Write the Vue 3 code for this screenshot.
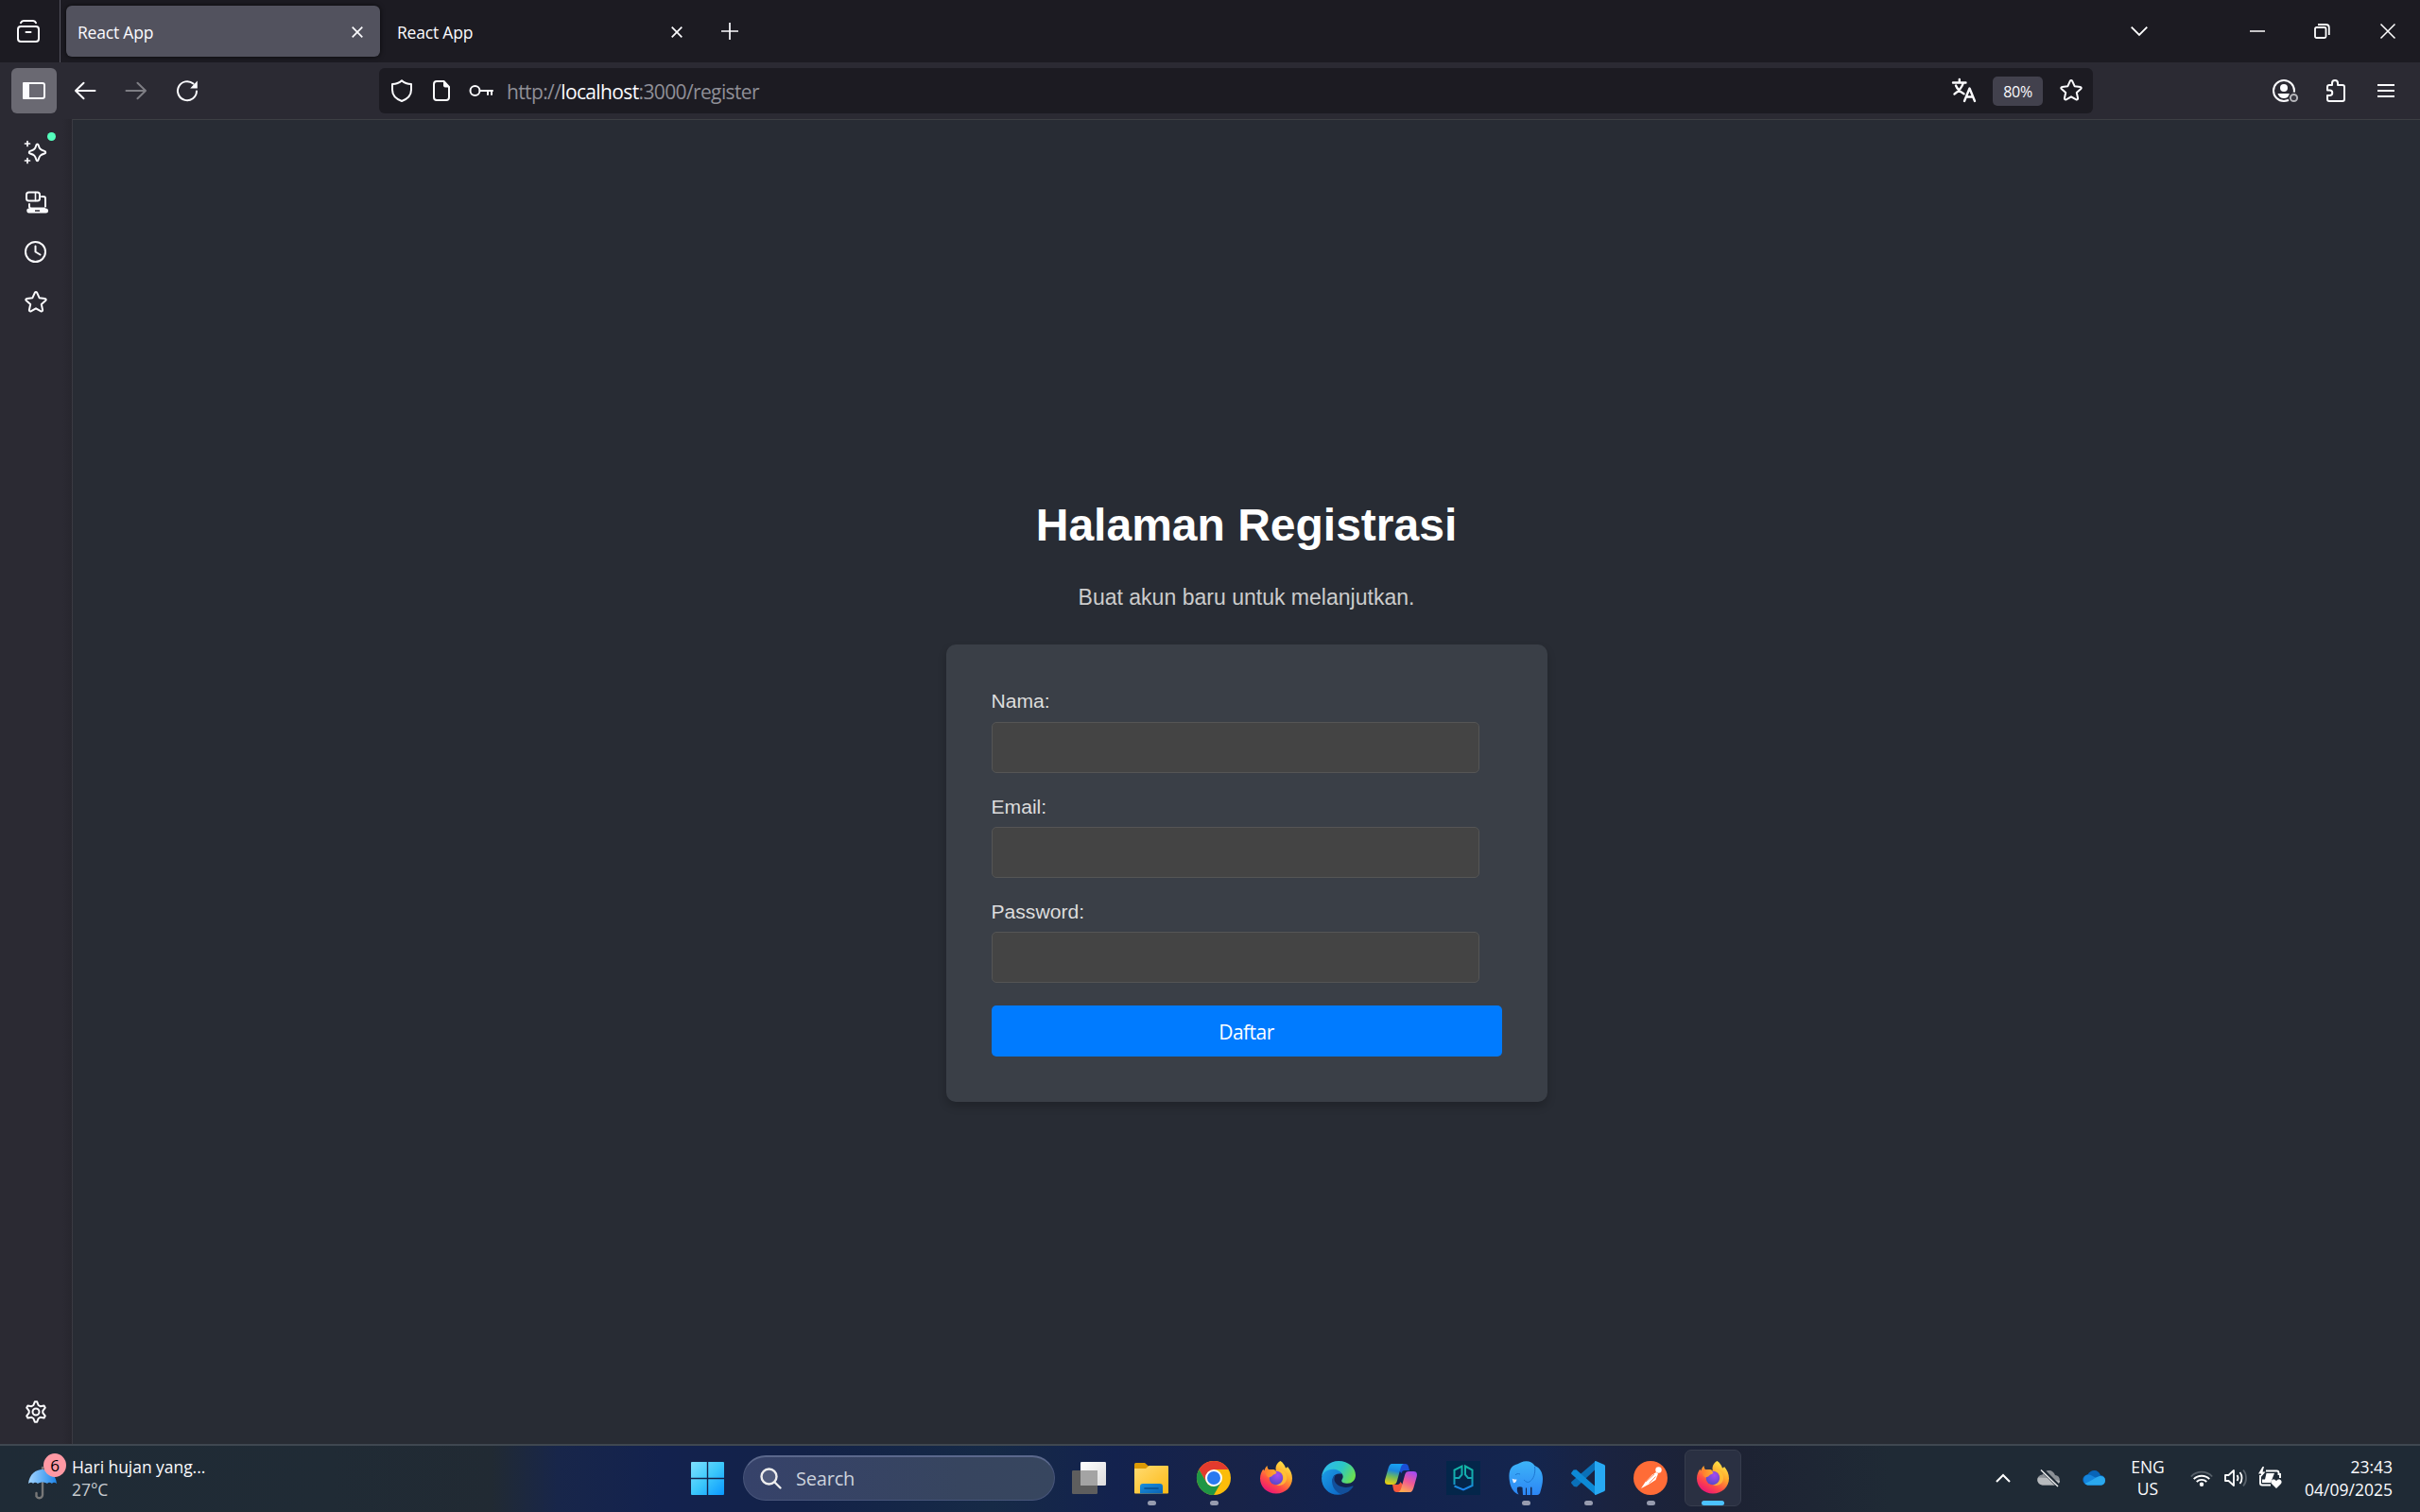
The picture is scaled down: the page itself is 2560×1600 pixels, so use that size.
<script setup>
const tabs = [
  { title: 'React App', active: true },
  { title: 'React App', active: false },
]

const fields = [
  { id: 'name', label: 'Nama:', type: 'text' },
  { id: 'email', label: 'Email:', type: 'email' },
  { id: 'password', label: 'Password:', type: 'password' },
]

const apps = [
  { id: 'taskview' },
  { id: 'explorer', running: true },
  { id: 'chrome', running: true },
  { id: 'firefox' },
  { id: 'edge' },
  { id: 'copilot' },
  { id: 'pgadmin' },
  { id: 'mamp', running: true },
  { id: 'vscode', running: true },
  { id: 'postman', running: true },
  { id: 'firefox', active: true },
]
</script>

<template>
  <div class="screen">
    <!-- Tab strip -->
    <header class="tabstrip">
      <div class="fx-view">
        <svg class="ic" viewBox="0 0 24 24">
          <rect x="1" y="7" width="22" height="16" rx="3" />
          <path d="M4 3.2C4.6 1.7 5.6 1 7 1h10c1.400 0 2.400.7 3 2.200" />
          <path d="M9.500 13h5" />
        </svg>
      </div>
      <div v-for="(t, i) in tabs" :key="i" class="tab" :class="{ active: t.active }">
        <span class="tab-title">{{ t.title }}</span>
        <svg class="tab-x" viewBox="0 0 12 12"><path d="M0.700 0.700l10.600 10.600M11.300 0.700L0.700 11.300" /></svg>
      </div>
      <div class="plus">
        <svg viewBox="0 0 18 18"><path d="M9 0v18M0 9h18" /></svg>
      </div>
      <div class="win">
        <svg class="w-chev" viewBox="0 0 18 10"><path d="M0.700 0.700L9 9l8.300-8.300" /></svg>
        <svg class="w-min" viewBox="0 0 16 16"><path d="M0 8h16" /></svg>
        <svg class="w-res" viewBox="0 0 17 16"><rect x="1" y="4" width="11.500" height="11" rx="1.500" /><path d="M4 1h8.500c2 0 3.300 1.300 3.300 3.300V12" /></svg>
        <svg class="w-close" viewBox="0 0 16 16"><path d="M0.500 0.500l15 15M15.500 0.500l-15 15" /></svg>
      </div>
    </header>

    <!-- Navigation bar -->
    <nav class="navbar">
      <div class="side-btn">
        <svg class="ic" viewBox="0 0 24 24"><rect x="1" y="4" width="22" height="16" rx="2" /><path class="fill" d="M1 4h5v16H1z" /></svg>
      </div>
      <div class="nav-btn"><svg class="ic" viewBox="0 0 24 24"><path d="M22.500 12H2M10.500 3.800L2 12l8.500 8.200" /></svg></div>
      <div class="nav-btn dim"><svg class="ic" viewBox="0 0 24 24"><path d="M1.500 12h20.500M13.500 3.800L22 12l-8.500 8.200" /></svg></div>
      <div class="nav-btn"><svg class="ic" viewBox="0 0 24 24"><path d="M22 12.500A10 10 0 1 1 18.500 4.600" /><path class="fillonly" d="M22.800 1.500v8h-7.600z" /></svg></div>

      <div class="urlbar">
        <svg class="ic shield" viewBox="0 0 24 24"><path d="M12 1.200C14.500 3.600 18.500 4.900 22 5v6c0 5.800-4.200 9.800-10 12C6.200 20.800 2 16.800 2 11V5c3.500-.1 7.500-1.400 10-3.800z" /></svg>
        <svg class="ic page" viewBox="0 0 24 24"><path d="M14.500 2H7a3 3 0 0 0-3 3v14a3 3 0 0 0 3 3h10a3 3 0 0 0 3-3V8z" /><path class="fillonly" d="M14 1l7 7.500h-5a2 2 0 0 1-2-2z" /></svg>
        <svg class="ic key" viewBox="0 0 26 24"><circle cx="6.500" cy="12" r="5" /><path d="M11.500 12H25M20 12v4M24 12v4" /></svg>
        <span class="url">http://<b>localhost</b>:3000/register</span>
        <svg class="ic translate" viewBox="0 0 24 24"><path d="M0 3.500h13.500M6.800 0v3.500M1.500 15.500C6 12.500 9.500 8.500 11 3.500M3 6.500c1.600 4 4.600 6.600 8.500 8.800M12 23l5.500-13.500L23 23M14 18.500h7" stroke-width="2.400" /></svg>
        <span class="zoom">80%</span>
        <svg class="ic star" viewBox="0 0 24 24"><path d="M10.900 1.700c.5-1 1.700-1 2.200 0l2.500 5.500 6 .7c1.100.1 1.500 1.400.7 2.100l-4.500 4 1.300 6c.2 1.100-.9 1.900-1.800 1.300L12 18.300l-5.300 3c-.9.6-2-.2-1.800-1.300l1.300-6-4.500-4C.9 9.300 1.300 8 2.400 7.900l6-.7z" /></svg>
      </div>

      <svg class="acct" viewBox="0 0 28 24">
        <circle cx="12" cy="12" r="11" fill="none" stroke="#fbfbfe" stroke-width="2" />
        <circle cx="12" cy="9" r="4" fill="#fbfbfe" />
        <path d="M5.500 15h13c-.8 3-3.400 5-6.500 5s-5.700-2-6.500-5z" fill="#fbfbfe" />
        <circle cx="22.500" cy="19.500" r="6" fill="#2b2a33" />
        <circle cx="22.500" cy="19.500" r="3.600" fill="#3a3942" stroke="#b4b4b9" stroke-width="2" />
      </svg>
      <svg class="ic puzzle" viewBox="0 0 24 24"><path d="M9 5V4a3 3 0 0 1 6 0v2h5a2 2 0 0 1 2 2v13a2 2 0 0 1-2 2H6a2 2 0 0 1-2-2v-4h2.500a2.700 2.700 0 0 0 0-5.500H4V8a2 2 0 0 1 2-2h3z" /></svg>
      <svg class="burger" viewBox="0 0 18 16"><path d="M0 2h18M0 8h18M0 14h18" /></svg>
    </nav>

    <div class="body">
      <!-- Browser sidebar -->
      <aside class="sidebar">
        <div class="side-item">
          <svg class="ic" viewBox="0 0 24 24"><path d="M13.500 2.500c.5 0 .9.300 1.100.9 1.200 4.200 2.300 5.300 6.500 6.500 1.500.4 1.500 2.200 0 2.600-4.200 1.200-5.300 2.300-6.500 6.600-.4 1.500-1.800 1.500-2.200 0-1.200-4.300-2.300-5.400-6.500-6.600-1.500-.4-1.500-2.200 0-2.600 4.200-1.200 5.300-2.300 6.500-6.500.2-.6.600-.9 1.100-.9z" transform="translate(0 1)" /><path d="M3 .5v5M.5 3h5M3 18.500v5M.5 21h5" stroke-width="1.700" /></svg>
          <span class="dot"></span>
        </div>
        <div class="side-item">
          <svg class="ic" viewBox="0 0 24 24"><rect x="2" y="1.500" width="14" height="9" rx="2.500" /><path d="M11.500 1.500v9" stroke-width="1.600" /><path d="M18 6h2a2 2 0 0 1 2 2v8.500M5 14v2.500a2 2 0 0 0 2 2h14" /><path class="fillonly" fill-rule="evenodd" d="M4.500 18.500h18a2 2 0 0 1 0 5H5a2.500 2.500 0 0 1-.5-5zM11 20.200v1.600h5v-1.600z" /></svg>
        </div>
        <div class="side-item">
          <svg class="ic" viewBox="0 0 24 24"><circle cx="11.500" cy="11.500" r="10.500" /><path d="M11.500 5.500v6l5 3" /></svg>
        </div>
        <div class="side-item">
          <svg class="ic" viewBox="0 0 24 24"><path d="M10.900 1.700c.5-1 1.700-1 2.200 0l2.500 5.500 6 .7c1.100.1 1.500 1.400.7 2.100l-4.500 4 1.300 6c.2 1.100-.9 1.900-1.800 1.300L12 18.300l-5.300 3c-.9.6-2-.2-1.800-1.300l1.300-6-4.500-4C.9 9.300 1.300 8 2.400 7.900l6-.7z" /></svg>
        </div>
        <div class="side-item gear">
          <svg class="ic" viewBox="0 0 24 24"><circle cx="12" cy="12" r="3.500" /><path d="M10.800 1.300h2.400l1.400 3.700 2 1.200 4-.7 1.200 2.200-2.500 3.200v2.200l2.500 3.200-1.200 2.200-4-.7-2 1.200-1.400 3.700h-2.400L9.400 19l-2-1.200-4 .7-1.200-2.200 2.500-3.200v-2.200L2.200 7.700l1.200-2.200 4 .7 2-1.200z" /></svg>
        </div>
      </aside>

      <!-- Page -->
      <main class="page-view">
        <h1>Halaman Registrasi</h1>
        <p class="lead">Buat akun baru untuk melanjutkan.</p>
        <form class="card" @submit.prevent>
          <div v-for="f in fields" :key="f.id" class="field">
            <label :for="f.id">{{ f.label }}</label>
            <input :id="f.id" :type="f.type" />
          </div>
          <button type="submit">Daftar</button>
        </form>
      </main>
    </div>

    <!-- Taskbar -->
    <footer class="taskbar">
      <div class="weather">
        <div class="umbrella">
          <svg viewBox="0 0 30 34">
            <defs><linearGradient id="umb" x1="0" y1="0" x2="1" y2="0"><stop offset="0" stop-color="#a3d5ff" /><stop offset="1" stop-color="#1d86ea" /></linearGradient></defs>
            <path d="M15 0v29a3.500 3.500 0 0 1-6.500 1.500V27" fill="none" stroke="#777" stroke-width="2.400" stroke-linecap="round" />
            <path d="M0 17C1 7 8 2 15 2s14 5 15 15c-2-1.600-4-1.600-5 0-2-1.600-4-1.600-5 0-3-2-7-2-10 0-2-1.600-4-1.600-5 0-1-1.600-3-1.600-5 0z" fill="url(#umb)" />
          </svg>
          <span class="badge">6</span>
        </div>
        <div class="w-text"><span>Hari hujan yang...</span><span class="temp">27°C</span></div>
      </div>

      <div class="center">
        <div class="start">
          <svg viewBox="0 0 35 35">
            <defs><linearGradient id="win" x1="0" y1="0" x2="1" y2="1"><stop offset="0" stop-color="#7fe0ff" /><stop offset=".5" stop-color="#3cc8fb" /><stop offset="1" stop-color="#0a98ff" /></linearGradient></defs>
            <path fill="url(#win)" d="M1 0h15.800v16.800H0V1a1 1 0 0 1 1-1zM18.200 0H34a1 1 0 0 1 1 1v15.800H18.200zM0 18.200h16.800V35H1a1 1 0 0 1-1-1zM18.200 18.200H35V34a1 1 0 0 1-1 1H18.200z" />
          </svg>
        </div>
        <div class="search">
          <svg viewBox="0 0 23 23"><circle cx="9.500" cy="9.500" r="8" fill="#ffffff22" /><path d="M15.500 15.500l6 6" /></svg>
          <span>Search</span>
        </div>
        <div v-for="(a, i) in apps" :key="i" class="app" :class="{ active: a.active }">
          <svg v-if="a.id === 'taskview'" viewBox="0 0 36 36">
            <defs><linearGradient id="tv" x1="0" y1="0" x2="1" y2="1"><stop offset="0" stop-color="#fff" /><stop offset="1" stop-color="#dcdcdc" /></linearGradient></defs>
            <rect x="9" y="1" width="27" height="25" rx="1.200" fill="url(#tv)" />
            <rect x="0" y="10" width="27" height="25" rx="1.200" fill="#5e5e5e" />
            <path d="M9 10h18v16H9z" fill="#a4a4a4" />
          </svg>
          <svg v-else-if="a.id === 'explorer'" viewBox="0 0 36 36">
            <defs><linearGradient id="fo" x1="0" y1="0" x2="1" y2="1"><stop offset="0" stop-color="#ffdc72" /><stop offset="1" stop-color="#fdb915" /></linearGradient><linearGradient id="fb" x1="0" y1="0" x2="1" y2="1"><stop offset="0" stop-color="#1a8fdc" /><stop offset="1" stop-color="#0a62b4" /></linearGradient></defs>
            <path d="M0 3.500A1.500 1.500 0 0 1 1.500 2H11l4 3.500V10H0z" fill="#dc9a05" />
            <path d="M0 8h12l3.500-3H35a1 1 0 0 1 1 1v27.500a1 1 0 0 1-1 1H1a1 1 0 0 1-1-1z" fill="url(#fo)" />
            <path d="M6 34.500V27a3 3 0 0 1 3-3h18a3 3 0 0 1 3 3v7.500z" fill="url(#fb)" /><path d="M11 29h14" stroke="#084c8a" stroke-width="1.600" stroke-linecap="round" />
          </svg>
          <svg v-else-if="a.id === 'chrome'" viewBox="0 0 36 36">
            <circle cx="18" cy="18" r="18" fill="#fbbc0a" />
            <path d="M2.400 9A18 18 0 0 1 33.600 9H18l-7.800 13.500z" fill="#e33b2e" />
            <path d="M2.400 9A18 18 0 0 0 18 36l7.800-13.500L18 27c-4 0-6.500-2-7.800-4.500z" fill="#1f9645" />
            <circle cx="18" cy="18" r="9" fill="#fff" /><circle cx="18" cy="18" r="7" fill="#2a7af0" />
          </svg>
          <svg v-else-if="a.id === 'firefox'" viewBox="0 0 36 36">
            <defs>
              <linearGradient id="ff" x1=".85" y1="0" x2=".25" y2="1"><stop offset="0" stop-color="#fff24d" /><stop offset=".4" stop-color="#ffa52b" /><stop offset=".7" stop-color="#ff4b45" /><stop offset="1" stop-color="#e8107c" /></linearGradient>
              <radialGradient id="fp" cx=".6" cy=".3" r=".7"><stop offset="0" stop-color="#a64bf0" /><stop offset="1" stop-color="#5a49c8" /></radialGradient>
              <linearGradient id="fh" x1="0" y1="0" x2="1" y2="0"><stop offset="0" stop-color="#ff7a2e" /><stop offset="1" stop-color="#ffb02d" /></linearGradient>
            </defs>
            <path d="M22.500 0c3 2 4.500 4.500 5.500 7.500 1-.2 1.700-.9 2-1.500 3 3.500 5 7.500 5 12.500 0 9-7.500 16-17 16S1 27.500 1 18.500C1 14.500 2.500 11 4.500 8.500c0 .8.300 1.500.8 2C6 8 7.200 6 8.500 5c0 1.500.5 3 1.500 4h4c1.500 0 3 .5 4 1.500C16.500 6 19 2 22.500 0z" fill="url(#ff)" />
            <circle cx="18" cy="18" r="7.300" fill="url(#fp)" />
            <path d="M7 9h7c2 .3 2.500 2 4.500 3.300-.5 1.700-3.500 1.700-4.500 3.200-.8 1.400-2.500 1.200-3.500 2-2.500-.6-4.500-4-3.500-8.500z" fill="url(#fh)" />
            <path d="M20 10.200c3 .8 5.300 3.500 5.300 7.300 0 4-3 7.500-7.300 8 6 2 11.500-2 11-8.500C28.500 12 24 8.500 20 10.200z" fill="#ffc83a" opacity=".7" />
          </svg>
          <svg v-else-if="a.id === 'edge'" viewBox="0 0 36 36">
            <defs>
              <linearGradient id="e1" x1="0" y1=".2" x2="1" y2=".6"><stop offset="0" stop-color="#2fb8f2" /><stop offset=".55" stop-color="#2cc7c5" /><stop offset="1" stop-color="#6be04f" /></linearGradient>
              <linearGradient id="e2" x1="0" y1="0" x2="1" y2="1"><stop offset="0" stop-color="#1c9ee6" /><stop offset="1" stop-color="#0b62c4" /></linearGradient>
            </defs>
            <path d="M0 17C1 7 8.500 0 18 0c10.500 0 18 7 18 15 0 5-3.500 8.800-8.500 8.800-4 0-6.500-1.300-6.300-3 .2-1.300 1.500-2 1.500-4.300 0-3.500-4-6-9-6-6 0-11.500 2.500-13.700 6.500z" fill="url(#e1)" />
            <path d="M0 18c1-5.500 6-9.200 12-9.200 4.500 0 8 2 9.500 5-8-2-11 4-9.500 9.500 1.300 5.500 5.500 9.500 12 11.200C12 39 0 31 0 18z" fill="url(#e2)" />
            <path d="M15 14.500c-6 3-5.500 16 6 20.800 5-.8 9.700-3.500 12.500-8 .4-.7-.2-1-.9-.7-7.500 3.300-17.500.3-19-6-.4-2 .2-4.500 1.400-6.100z" fill="#124f9a" />
          </svg>
          <svg v-else-if="a.id === 'copilot'" viewBox="0 0 36 36">
            <defs>
              <linearGradient id="c1" x1=".4" y1="0" x2=".2" y2="1"><stop offset="0" stop-color="#18a0f0" /><stop offset=".3" stop-color="#1b86dc" /><stop offset=".6" stop-color="#6fba5c" /><stop offset="1" stop-color="#f5d00b" /></linearGradient>
              <linearGradient id="c2" x1=".7" y1="0" x2=".3" y2="1"><stop offset="0" stop-color="#a54bf0" /><stop offset=".5" stop-color="#f05a94" /><stop offset="1" stop-color="#ffad4f" /></linearGradient>
            </defs>
            <path d="M10 3h12.500c2 0 3 1 3.500 3l1 4h-5c-2 0-3 1-3.500 3z" fill="#1a4fd6" />
            <path d="M26 33H13.500c-2 0-3-1-3.500-3l-1-5h5c2 0 3-1 3.500-3z" fill="#f4573c" />
            <path d="M8.500 3H21c-2 .8-2.800 2.500-3.500 5l-3.700 13.500C13 24 12 25 9.500 25H4.500C1 25 .5 22 1.400 19L4.500 8C5.400 5 6.500 3 8.500 3z" fill="url(#c1)" />
            <path d="M27.500 33H15c2-.8 2.800-2.500 3.500-5l3.700-13.500C23 12 24 11 26.500 11h5c3.500 0 4 3 3.100 6l-3.100 11c-.9 3-2 5-4 5z" fill="url(#c2)" />
          </svg>
          <svg v-else-if="a.id === 'pgadmin'" viewBox="0 0 36 36">
            <defs><linearGradient id="pg" x1="0" y1="0" x2="0" y2="1"><stop offset="0" stop-color="#12b8a6" /><stop offset=".6" stop-color="#14a5b5" /><stop offset="1" stop-color="#1a7ff0" /></linearGradient></defs>
            <path d="M0 0h36v36H0z" fill="#04264a" />
            <path d="M8.500 25V9.500L16.500 5.500v9l-3 3.500H8.500M27.500 18H23l-3-3.500v-9l7.500 4V26L18 30.500l-9.500-4" fill="none" stroke="url(#pg)" stroke-width="2" />
          </svg>
          <svg v-else-if="a.id === 'mamp'" viewBox="0 0 36 36">
            <defs><linearGradient id="el" x1="0" y1="0" x2="0" y2="1"><stop offset="0" stop-color="#3db4f8" /><stop offset="1" stop-color="#2c86f5" /></linearGradient></defs>
            <path d="M13 1.500C18-1 25 0 27.500 5 33 7 36 12 36 19c0 5-1.500 9.500-2.500 13.500-.5 2-1.500 3.500-3.500 3.500h-5.500v-7.500c0-.6-.3-1-.7-1s-.8.4-.8 1V36H15l-.5-8c-1.500-1-4-.8-5.500 0-.5 3 0 5 1.500 7.500C6 34 2 29 1 22-.5 13 1 7 6 4.500c2.500-1 4-1.500 7-3z" fill="url(#el)" />
            <path d="M18 28.500h1v7.500h-1z" fill="#14254e" />
            <path d="M27.500 6c1 7-1 13-5.500 16-2 1.200-4 0-6-2" fill="none" stroke="#1e78d2" stroke-width="1" />
            <path d="M7 15c1-1.500 3-2 5-1" fill="none" stroke="#1e78d2" stroke-width="1" />
            <path d="M3.500 18.500c1.500 1 3 1.200 5 1-.3 2.300-1.500 3.800-3.500 3.800z" fill="#e6eefc" />
          </svg>
          <svg v-else-if="a.id === 'vscode'" viewBox="0 0 36 36">
            <path d="M26 0l-1 9.500L6 27.500l-3-.5-2.500-3c-.7-.8-.5-1.500.2-2.200z" fill="#0a70b8" />
            <path d="M26 36l-1-9.500L5.500 9.200l-3 .3L.6 12c-.7.800-.5 1.500.2 2.200z" fill="#0d8ad6" />
            <path d="M26 0l8.700 3.800c.8.400 1.300 1 1.300 2v24.400c0 1-.5 1.600-1.300 2L26 36c-.6.200-1-.2-1-1V1c0-.8.400-1.200 1-1z" fill="#27a9f3" />
          </svg>
          <svg v-else viewBox="0 0 36 36">
            <circle cx="18" cy="18" r="18" fill="#ff6c37" />
            <circle cx="26.500" cy="9.500" r="3.200" fill="#fff" />
            <path d="M24 12l2 1.500-2.500 6.500-7 4.500-6.500 3.500-2 1 5-7.500 7-7z" fill="#fff" />
            <path d="M13 22l9-8M16.500 23.500l7-7" stroke="#ff6c37" stroke-width=".8" />
          </svg>
          <span v-if="a.running || a.active" class="run"></span>
        </div>
      </div>

      <div class="tray">
        <svg class="t-chev" viewBox="0 0 16 9"><path d="M1 8l7-7 7 7" /></svg>
        <svg class="t-cloud" viewBox="0 0 24 20">
          <path d="M6 17.500a5.500 5.500 0 0 1-.5-11C7 3.500 9.500 2 12.500 2c3 0 5.500 2 6.500 5a5.300 5.300 0 0 1 .5 10.500z" fill="#8b9096" /><path d="M6 17.500a5.500 5.500 0 0 1-5-8l9 .5 14 3a5 5 0 0 1-4.500 4.500z" fill="#b7babd" /><path d="M5 1l18 18" stroke="#1f2a35" stroke-width="4" /><path d="M4 1.500L22 19" stroke="#f2f2f2" stroke-width="1.400" />
        </svg>
        <svg class="t-cloud" viewBox="0 0 24 20">
          <path d="M6 17.500a5.500 5.500 0 0 1-.5-11C7 3.500 9.500 2 12.500 2c3 0 5.500 2 6.500 5a5.300 5.300 0 0 1 .5 10.500z" fill="#0864b8" /><path d="M6 17.500A5.700 5.700 0 0 1 5 6.500c4-.5 6 2 9 3l9.500 5c-.8 2-2.500 3-4.500 3z" fill="#1484dc" /><path d="M2.500 16c3-1.500 8-4 11.500-6.300 5-3.200 10-1.700 10 2.800 0 3-2 5-4.500 5H6c-1.500 0-2.700-.6-3.500-1.500z" fill="#2aa8ee" />
        </svg>
        <div class="lang"><span>ENG</span><span>US</span></div>
        <svg class="t-wifi" viewBox="0 0 24 18" fill="none" stroke="#fff" stroke-width="1.800">
          <path d="M.8 7.500a15.500 15.500 0 0 1 22.400 0" stroke="#58616a" /><path d="M3.700 10.200a11.700 11.700 0 0 1 16.600 0M6.700 13a7.500 7.500 0 0 1 10.600 0" /><circle cx="12" cy="15.700" r="2.200" fill="#fff" stroke="none" />
        </svg>
        <svg class="t-snd" viewBox="0 0 24 20" fill="none" stroke="#fff" stroke-width="1.800" stroke-linejoin="round">
          <path d="M1 7h3.500L10 2v16l-5.500-5H1zM13.500 7c1.200 1.700 1.200 4.300 0 6M16.500 4c2.700 3.300 2.700 8.700 0 12" /><path d="M20 1.500c4 4.500 4 12.500 0 17" stroke="#58616a" />
        </svg>
        <svg class="t-bat" viewBox="0 0 25 24">
          <path d="M8 4.500h11.500c1.200 0 2 .8 2 2V8H23v4M2 9v8.500c0 1.200.8 2 2 2h9" fill="none" stroke="#fff" stroke-width="1.900" />
          <path d="M8.500 7H17l-4 10H4v-3.500h3z" fill="#fff" /><path d="M4.500 0L0 7.500h3L2 12l5.500-6.500H4.500L6 0z" fill="#fff" />
          <path d="M19 23l-5-5c-1.500-2 0-4.500 2-4.500 1.500 0 2.300.7 3 1.700.7-1 1.500-1.700 3-1.700 2 0 3.500 2.500 2 4.500z" fill="#fff" />
        </svg>
        <div class="clock"><span>23:43</span><span>04/09/2025</span></div>
      </div>
    </footer>
  </div>
</template>

<style>
body { margin: 0; background: #282c34; overflow: hidden; }
</style>

<style scoped>
* { box-sizing: border-box; }
svg { display: block; flex: none; overflow: visible; }
.screen {
  width: 2560px; height: 1600px; display: flex; flex-direction: column;
  font-family: "Open Sans", "Noto Sans", sans-serif; color: #fbfbfe; background: #282c34; overflow: hidden;
}
.ic { width: 24px; height: 24px; fill: none; stroke: #fbfbfe; stroke-width: 2; stroke-linejoin: round; stroke-linecap: round; }
.ic .fill { fill: #fbfbfe; }
.ic .fillonly { fill: #fbfbfe; stroke: none; }

.tabstrip { height: 66px; flex: none; background: #1c1b22; display: flex; align-items: center; }
.fx-view { width: 64px; height: 66px; border-right: 1px solid #55545f; display: flex; align-items: center; padding-left: 18px; margin-right: 6px; }
.tab { width: 332px; height: 54px; margin-right: 6px; border-radius: 6px; padding: 1px 18px 0 12px; display: flex; align-items: center; justify-content: space-between; }
.tab.active { background: #52525e; box-shadow: 0 0 5px rgba(0, 0, 0, .7); }
.tab-title { font-size: 17.500px; line-height: 24px; letter-spacing: -.2px; }
.tab-x { width: 12px; height: 12px; fill: none; stroke: #fbfbfe; stroke-width: 1.700; }
.plus { margin-left: 17px; }
.plus svg { width: 18px; height: 18px; stroke: #fbfbfe; stroke-width: 1.700; }
.win { margin-left: auto; display: flex; align-items: center; padding-right: 26px; fill: none; stroke: #fff; stroke-width: 1.500; }
.w-chev { width: 18px; height: 10px; margin-right: 108px; stroke-width: 1.800; }
.w-min { width: 16px; height: 16px; margin-right: 52px; }
.w-res { width: 17px; height: 16px; margin-right: 53px; stroke-width: 1.800; }
.w-close { width: 16px; height: 16px; }

.navbar { height: 60px; flex: none; background: #2b2a33; display: flex; align-items: center; padding-left: 12px; }
.side-btn { width: 48px; height: 48px; border-radius: 6px; background: #6a6972; display: flex; align-items: center; justify-content: center; margin-right: 3px; }
.nav-btn { width: 54px; display: flex; justify-content: center; }
.nav-btn.dim { opacity: .4; }
.urlbar { width: 1813px; height: 48px; margin-left: 176px; border-radius: 6px; background: #1c1b22; display: flex; align-items: center; padding: 0 11px 0 12px; }
.page { margin-left: 18px; }
.key { width: 26px; margin-left: 17px; }
.url { margin-left: 14px; padding-top: 2px; font-size: 21px; line-height: 30px; letter-spacing: -.630px; color: #8f8f97; white-space: nowrap; }
.url b { font-weight: 400; color: #fbfbfe; }
.translate { margin-left: auto; }
.zoom { margin-left: 18px; margin-right: 18px; width: 53px; height: 31px; border-radius: 5px; background: #42414d; font-size: 16px; line-height: 32px; text-align: center; letter-spacing: -.3px; }
.acct { width: 28px; height: 24px; margin-left: 190px; }
.puzzle { margin-left: 26px; }
.burger { width: 18px; height: 16px; margin-left: 33px; stroke: #fbfbfe; stroke-width: 2; }

.body { flex: 1; display: flex; min-height: 0; background: #2b2a33; }
.sidebar { width: 76px; flex: none; display: flex; flex-direction: column; align-items: center; padding: 8px 0; background: linear-gradient(90deg, #2b2a33 66px, #27262e); }
.side-item { width: 76px; height: 53px; display: flex; align-items: center; justify-content: center; position: relative; }
.dot { position: absolute; left: 50px; top: 6px; width: 9px; height: 9px; border-radius: 50%; background: #54ffbd; }
.gear { margin-top: auto; }
.page-view {
  flex: 1; background: #282c34; border-left: 1px solid #3a3a42; border-top: 1px solid #3d3f44;
  display: flex; flex-direction: column; align-items: center; padding-top: 401px;
  font-family: "Liberation Sans", Arial, sans-serif;
}
h1 { margin: 0; font-size: 48px; line-height: 56px; font-weight: 700; color: #fff; }
.lead { margin: 33px 0 35px; font-size: 23.040px; line-height: 30px; color: #ccc; }
.card { width: 636px; height: 484px; border-radius: 10px; background: #3a3f47; padding: 48px; box-shadow: 0 5px 10px rgba(0, 0, 0, .2); }
.field { display: flex; flex-direction: column; align-items: flex-start; margin-bottom: 23px; }
label { font-size: 21.120px; line-height: 24px; margin-bottom: 10px; color: #ddd; }
.field + .field label { line-height: 26px; margin-bottom: 8px; }
input { display: block; width: 516px; height: 54px; border: 1px solid #555; border-radius: 5px; background: #444; color: #fff; padding: 12px; }
.card button { display: block; width: 540px; height: 54px; margin-top: 24px; border: 0; border-radius: 5px; background: #007bff; color: #fff; font: 21px/54px "Open Sans", "Noto Sans", sans-serif; letter-spacing: -.5px; padding: 1px 0 0; }

.taskbar {
  height: 72px; flex: none; border-top: 2px solid #3f4750; padding-bottom: 2px; display: flex; align-items: center; font-size: 17.500px;
  background: linear-gradient(90deg, #1f2b36 0, #202b35 350px, #212a33 520px, #18264a 590px, #13224e 700px, #132248 850px, #162a46 1050px, #13224e 1180px, #182348 1310px, #13224e 1420px, #14254e 1620px, #1a2340 1700px, #1d2233 1830px, #1f2a35 2000px, #1f2a35 100%);
}
.weather { display: flex; align-items: center; padding-left: 30px; width: 715px; }
.umbrella { position: relative; width: 30px; height: 34px; margin-top: 12px; }
.umbrella svg { width: 30px; height: 34px; }
.badge { position: absolute; left: 16px; top: -15px; width: 24px; height: 25px; border-radius: 50%; background: #ff99a4; color: #000; font-size: 17px; line-height: 25px; text-align: center; }
.w-text { display: flex; flex-direction: column; margin-left: 16px; line-height: 24px; letter-spacing: -.050px; white-space: nowrap; }
.temp { color: #c8ccd0; }
.center { display: flex; align-items: center; }
.start { width: 68px; padding-right: 2px; display: flex; justify-content: center; }
.start svg { width: 35px; height: 35px; }
.search { width: 330px; height: 48px; margin: 0 3px; border-radius: 24px; border: 1px solid #48557a; border-top: 2px solid #5b688c; background: linear-gradient(90deg, #36426a, #37455f 70%, #37465f); display: flex; align-items: center; padding-left: 17px; color: #ccd2dc; font-size: 20px; letter-spacing: -.2px; }
.search svg { width: 23px; height: 23px; margin-right: 15px; fill: none; stroke: #eee; stroke-width: 2.400; stroke-linecap: round; }
.app { width: 60px; height: 60px; margin: 0 3px; display: flex; align-items: center; justify-content: center; position: relative; border-radius: 7px; border: 1px solid transparent; }
.app svg { width: 36px; height: 36px; }
.app.active { background: #2a3042; border-color: #373d4d; }
.run { position: absolute; left: 50%; bottom: 0; width: 9px; height: 5px; margin-left: -4.500px; border-radius: 3px; background: #979caf; }
.active .run { width: 24px; margin-left: -12px; background: #4cc2ff; }
.tray { margin-left: auto; display: flex; align-items: center; padding-right: 29px; }
.t-chev { width: 16px; height: 9px; fill: none; stroke: #fff; stroke-width: 2; margin-right: 28px; }
.t-cloud { width: 24px; height: 20px; margin-right: 24px; }
.lang { width: 66px; margin-left: -12px; margin-right: 12px; display: flex; flex-direction: column; align-items: center; line-height: 23px; }
.t-wifi { width: 24px; height: 18px; margin-right: 12px; }
.t-snd { width: 24px; height: 20px; margin-right: 12px; }
.t-bat { width: 25px; height: 24px; }
.clock { width: 117px; display: flex; flex-direction: column; align-items: flex-end; line-height: 24px; white-space: nowrap; }
</style>
